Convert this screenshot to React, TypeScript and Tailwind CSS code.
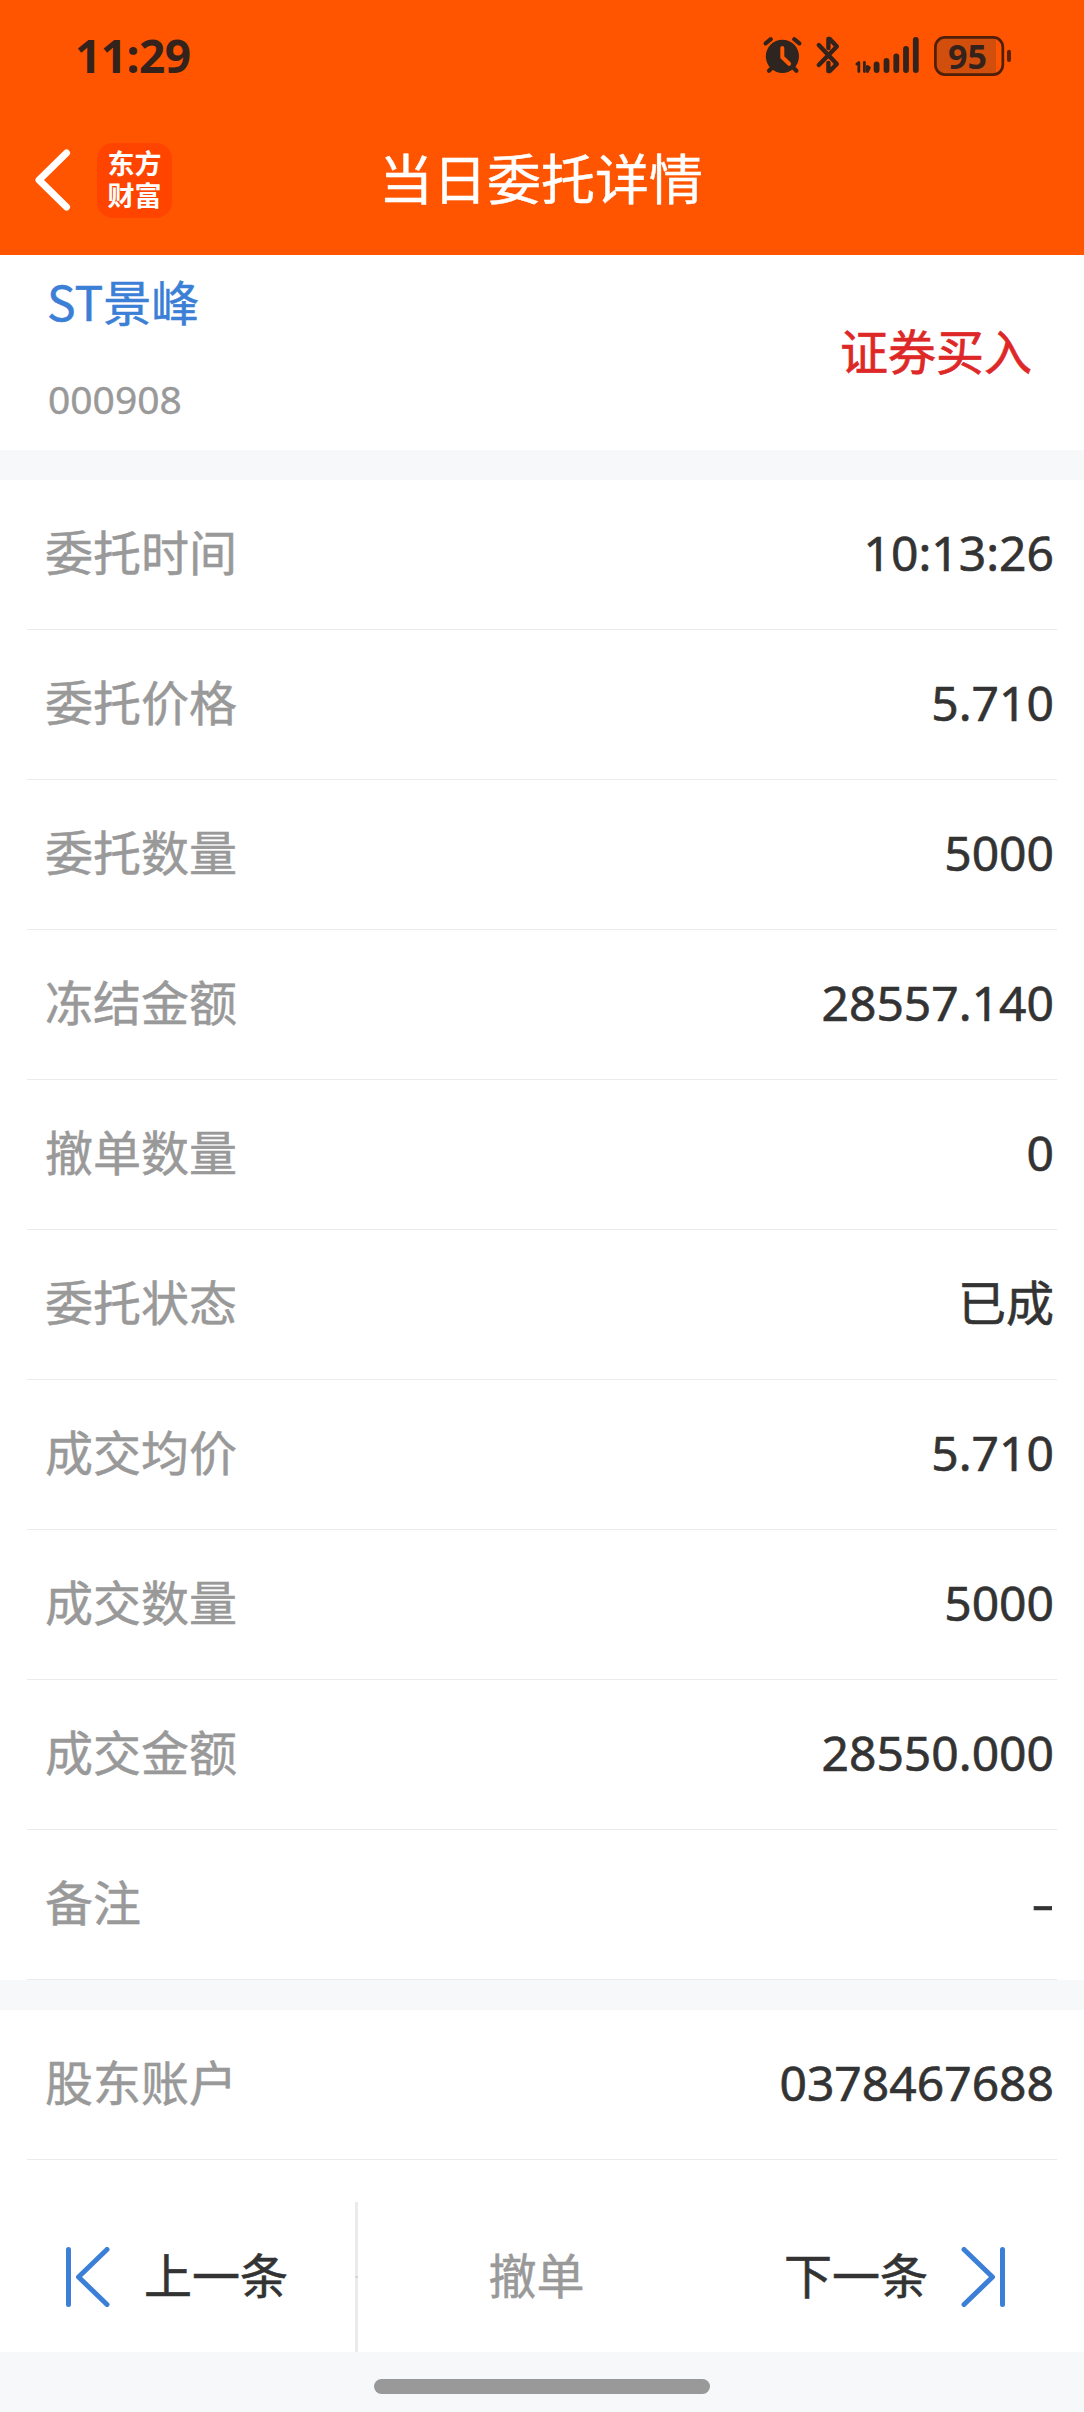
import React from 'react';

const rows = [
  { label: '委托时间', value: '10:13:26' },
  { label: '委托价格', value: '5.710' },
  { label: '委托数量', value: '5000' },
  { label: '冻结金额', value: '28557.140' },
  { label: '撤单数量', value: '0' },
  { label: '委托状态', value: '已成' },
  { label: '成交均价', value: '5.710' },
  { label: '成交数量', value: '5000' },
  { label: '成交金额', value: '28550.000' },
  { label: '备注', value: '-' },
];

function StatusIcons() {
  return (
    <svg width="252" height="44" viewBox="762 35 252 44" fill="none" strokeLinecap="round" strokeLinejoin="round">
      {/* Alarm */}
      <circle cx="782.4" cy="57.3" r="16.6" fill="#2e2520" />
      <path d="M765.6 44.4l5.2-4.2M799.4 44.4l-5.2-4.2M769 71.8l3-3M796.4 71.8l-3-3" stroke="#33231c" strokeWidth="4.2" />
      <path d="M782.3 49v9.2l6.8 6.6" stroke="#ff5a04" strokeWidth="4" />
      {/* Bluetooth */}
      <path d="M818.8 46l18 19-7 7h-1.4v-8M818.8 66l18-18.5-7-7.5h-1.4v9" stroke="#33231c" strokeWidth="4.4" />
      {/* Signal */}
      <path d="M856.8 65l2-1.5V72.5M864.4 63.5v9M867.4 72.5v-5l2 1.2z" stroke="#33231c" strokeWidth="2.8" />
      <path d="M876.6 65.5v5.6M886.5 62v9.1M896.3 57.3v13.8M906 50v21.1M915.8 41v30.1" stroke="#33231c" strokeWidth="5.8" />
      {/* Battery */}
      <path d="M946 39h50v37h-50a10 10 0 0 1-10-10v-17a10 10 0 0 1 10-10z" fill="#d24e0d" />
      <rect x="935.4" y="38.4" width="67.4" height="37.2" rx="9.5" stroke="#4f1f0a" strokeWidth="2.7" />
      <path d="M1009 52.8v8.2" stroke="#5c230a" strokeWidth="4" />
    </svg>
  );
}

function SkipIcon({ className }: { className?: string }) {
  return (
    <svg width="44" height="60" viewBox="0 0 44 60" fill="none" stroke="#3b7fd6" strokeWidth="5" strokeLinecap="round" strokeLinejoin="round" className={className}>
      <path d="M2.5 2.5v55M41 2.5L12.5 30 41 57.5" />
    </svg>
  );
}

function Row({ label, value }: { label: string; value: string }) {
  return (
    <div className="mx-[27px] h-[150px] border-b border-[#ebebeb] flex items-center justify-between pl-[18px] pr-[3px] pb-[3px]">
      <span className="text-[#999] [-webkit-text-stroke:0.5px_#999]">{label}</span>
      <span className={`text-[#333] [-webkit-text-stroke:0.6px_#333] ${value === '-' ? 'inline-block scale-x-150 origin-right' : ''}`}>
        {value}
      </span>
    </div>
  );
}

export default function App() {
  return (
    <div className="w-[1084px] h-[2412px] flex flex-col bg-white text-[48px] leading-none font-['Noto_Sans','Noto_Sans_CJK_SC',sans-serif] overflow-hidden">
      {/* Header */}
      <header className="h-[255px] shrink-0 bg-[#ff5500] text-white">
        <div className="h-[112px] flex items-center justify-between pl-[75px] pr-[70px]">
          <span className="text-[46px] font-bold tracking-[-0.5px] text-[#33231c] pb-[3px]">11:29</span>
          <div className="relative">
            <StatusIcons />
            <span className="absolute left-[186px] top-[5px] text-[34px] font-bold text-[#33231c]">95</span>
          </div>
        </div>
        <div className="h-[136px] flex items-center pl-[35px]">
          <svg width="36" height="62" viewBox="0 0 36 62" fill="none" stroke="#fff" strokeWidth="7" strokeLinecap="round" strokeLinejoin="round">
            <path d="M31.5 4L4 31l27.5 27" />
          </svg>
          <div className="ml-[26px] w-[75px] h-[75px] rounded-[16px] bg-[#ff4400] px-[10px] pt-[5px] text-center text-[27px] leading-[32px] font-bold break-all">
            东方财富
          </div>
          <h1 className="flex-1 pr-[174px] pb-[2px] text-center text-[54px] [-webkit-text-stroke:0.5px_#fff]">当日委托详情</h1>
        </div>
      </header>

      {/* Stock */}
      <section className="h-[195px] shrink-0 flex items-start justify-between pl-[47px] pr-[52px]">
        <div className="flex flex-col pt-[21px] gap-[55px]">
          <span className="text-[#3b7fd6] [-webkit-text-stroke:0.5px_#3b7fd6] font-['Noto_Sans_CJK_SC',sans-serif]">ST景峰</span>
          <span className="pl-[1px] text-[39px] text-[#999] [-webkit-text-stroke:0.4px_#999]">000908</span>
        </div>
        <span className="pt-[73px] text-[#de2828] [-webkit-text-stroke:0.7px_#de2828]">证券买入</span>
      </section>

      <div className="h-[30px] shrink-0 bg-[#f6f8fa]" />

      {/* Order details */}
      <section className="shrink-0">
        {rows.map((row) => (
          <Row key={row.label} label={row.label} value={row.value} />
        ))}
      </section>

      <div className="h-[30px] shrink-0 bg-[#f6f8fa]" />

      <section className="shrink-0">
        <Row label="股东账户" value="0378467688" />
      </section>

      {/* Actions */}
      <footer className="mt-[42px] h-[150px] shrink-0 flex">
        <button className="relative w-[358px] border-r-[3px] border-[#ebebeb] flex items-center pl-[66px] gap-[34px] text-[#333] [-webkit-text-stroke:0.6px_#333]">
          <SkipIcon />
          <span className="pb-[2px]">上一条</span>
          <span className="absolute -right-[3px] top-[74px] w-[3px] h-[2px] bg-[#d6d6d6]" />
        </button>
        <button className="w-[357px] pb-[2px] text-[#999] [-webkit-text-stroke:0.5px_#999]">撤单</button>
        <button className="flex-1 flex items-center justify-end pr-[79px] gap-[33px] text-[#333] [-webkit-text-stroke:0.6px_#333]">
          <span className="pb-[2px]">下一条</span>
          <SkipIcon className="rotate-180" />
        </button>
      </footer>

      <div className="h-[60px] shrink-0 bg-[#f6f8fa] flex justify-center pt-[27px]">
        <div className="w-[336px] h-[15px] rounded-full bg-[#999]" />
      </div>
    </div>
  );
}
